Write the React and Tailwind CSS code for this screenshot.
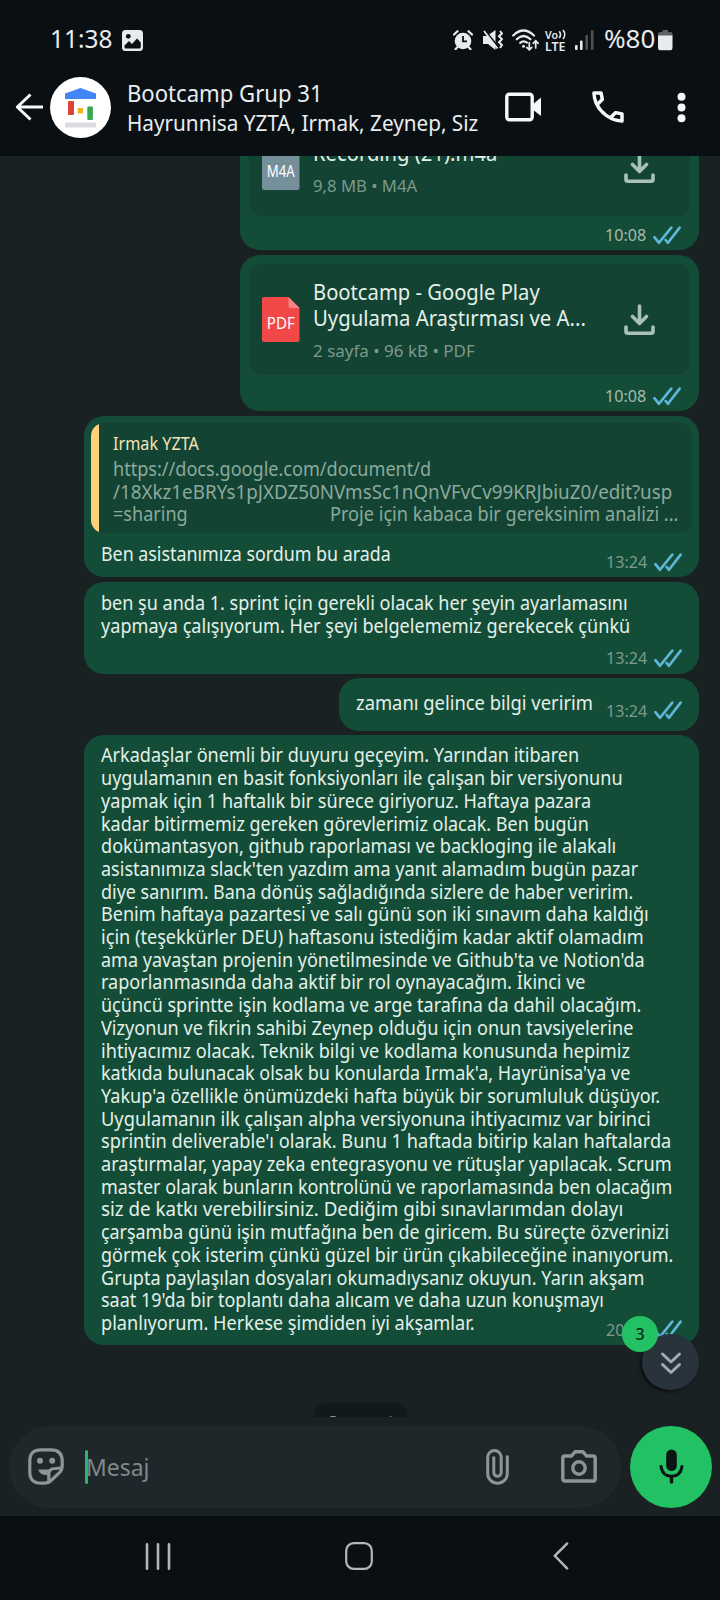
import { useLayoutEffect, useRef, useState } from "react";

/* One line of text condensed or widened so that it spans `w` pixels. */
function Fit({ w, children, className = "" }) {
  const ref = useRef(null);
  const [scale, setScale] = useState(1);
  useLayoutEffect(() => {
    setScale(w / ref.current.offsetWidth);
  }, [w, children]);
  return (
    <span className={"block shrink-0 whitespace-pre " + className} style={{ width: w + "px" }}>
      <span ref={ref} className="block w-max origin-left" style={{ transform: `scaleX(${scale})` }}>
        {children}
      </span>
    </span>
  );
}

function Ticks() {
  return (
    <svg width="28" height="19" viewBox="0 0 28 19" fill="none" stroke="#5fb8dc" strokeWidth="2.6" strokeLinecap="round" strokeLinejoin="round">
      <path d="M1.4 11.2 L6 16.8 L18.3 1.6" />
      <path d="M12.6 14 L15 16.8 L26.6 1.6" />
    </svg>
  );
}

function Stamp({ time, className = "" }) {
  return (
    <div className={"flex h-5 shrink-0 items-center text-[16.5px] leading-5 " + className}>
      <Fit w={41}>{time}</Fit>
      <span className="ml-[7px]">
        <Ticks />
      </span>
    </div>
  );
}

function Download() {
  return (
    <svg className="mt-px" width="31" height="32" viewBox="0 0 31 32" fill="none" stroke="#a9c0b6" strokeWidth="3.6" strokeLinecap="round" strokeLinejoin="round">
      <path d="M15.5 2 V18.5 M8.5 12.5 L15.5 19.5 L22.5 12.5" />
      <path d="M2 23 V27.5 Q2 29.3 3.8 29.3 H27.2 Q29 29.3 29 27.5 V23" />
    </svg>
  );
}

function FileIcon({ label, fill, fold }) {
  return (
    <svg width="38" height="45" viewBox="0 0 38 45" className="shrink-0">
      <path d="M2 0 H26.5 L37.5 11 V43 Q37.5 45 35.5 45 H2 Q0 45 0 43 V2 Q0 0 2 0 Z" fill={fill} />
      <path d="M26.5 0 L37.5 11 H28.5 Q26.5 11 26.5 9 Z" fill={fold} />
      <text x="18.8" y="32" textAnchor="middle" fontSize="16" textLength="28" lengthAdjust="spacingAndGlyphs" fill="#fff">
        {label}
      </text>
    </svg>
  );
}

const LONG = [
  ["Arkadaşlar önemli bir duyuru geçeyim. Yarından itibaren", 477],
  ["uygulamanın en basit fonksiyonları ile çalışan bir versiyonunu", 521],
  ["yapmak için 1 haftalık bir sürece giriyoruz. Haftaya pazara", 489],
  ["kadar bitirmemiz gereken görevlerimiz olacak. Ben bugün", 487],
  ["dokümantasyon, github raporlaması ve backloging ile alakalı", 514],
  ["asistanımıza slack'ten yazdım ama yanıt alamadım bugün pazar", 536],
  ["diye sanırım. Bana dönüş sağladığında sizlere de haber veririm.", 531],
  ["Benim haftaya pazartesi ve salı günü son iki sınavım daha kaldığı", 547],
  ["için (teşekkürler DEU) haftasonu istediğim kadar aktif olamadım", 542],
  ["ama yavaştan projenin yönetilmesinde ve Github'ta ve Notion'da", 543],
  ["raporlanmasında daha aktif bir rol oynayacağım. İkinci ve", 484],
  ["üçüncü sprintte işin kodlama ve arge tarafına da dahil olacağım.", 539],
  ["Vizyonun ve fikrin sahibi Zeynep olduğu için onun tavsiyelerine", 531],
  ["ihtiyacımız olacak. Teknik bilgi ve kodlama konusunda hepimiz", 528],
  ["katkıda bulunacak olsak bu konularda Irmak'a, Hayrünisa'ya ve", 528],
  ["Yakup'a özellikle önümüzdeki hafta büyük bir sorumluluk düşüyor.", 558],
  ["Uygulamanın ilk çalışan alpha versiyonuna ihtiyacımız var birinci", 549],
  ["sprintin deliverable'ı olarak. Bunu 1 haftada bitirip kalan haftalarda", 569],
  ["araştırmalar, yapay zeka entegrasyonu ve rütuşlar yapılacak. Scrum", 570],
  ["master olarak bunların kontrolünü ve raporlamasında ben olacağım", 570],
  ["siz de katkı verebilirsiniz. Dediğim gibi sınavlarımdan dolayı", 521],
  ["çarşamba günü işin mutfağına ben de giricem. Bu süreçte özverinizi", 567],
  ["görmek çok isterim çünkü güzel bir ürün çıkabileceğine inanıyorum.", 571],
  ["Grupta paylaşılan dosyaları okumadıysanız okuyun. Yarın akşam", 542],
  ["saat 19'da bir toplantı daha alıcam ve daha uzun konuşmayı", 502],
  ["planlıyorum. Herkese şimdiden iyi akşamlar.", 374],
];

function StatusBar() {
  return (
    <div className="flex h-[70px] shrink-0 items-start pl-[49.5px] pt-[22px] text-[#e8ebed]">
      <Fit w={62} className="text-[26px] leading-8">11:38</Fit>
      <svg className="ml-[10.5px] mt-2" width="21" height="21" viewBox="0 0 21 21">
        <rect width="21" height="21" rx="3.5" fill="#e8ebed" />
        <circle cx="6.3" cy="6.3" r="2.4" fill="#0a0f13" />
        <path d="M2.5 15.5 L7 11 L10 14 L15 8.5 L18.8 12.5 V17 Q18.8 18.5 17.3 18.5 H4 Q2.5 18.5 2.5 17 Z" fill="#0a0f13" />
      </svg>
      <div className="ml-auto mr-[47px] flex items-start">
        <svg className="mt-2" width="20" height="20" viewBox="0 0 20 20">
          <circle cx="10" cy="11" r="8.3" fill="#e8ebed" />
          <path d="M1 4.5 L4.5 1.2 M19 4.5 L15.5 1.2 M4.5 17 L2.5 19.2 M15.5 17 L17.5 19.2" stroke="#e8ebed" strokeWidth="2.2" strokeLinecap="round" />
          <path d="M10 6 V11.3 H14" fill="none" stroke="#0a0f13" strokeWidth="1.8" />
        </svg>
        <svg className="ml-[10px] mt-[7px]" width="20" height="22" viewBox="0 0 20 22">
          <path d="M0 7 H4 L12.5 1 V21 L5 15 H0 Z" fill="#e8ebed" />
          <path d="M0 -0.5 L15 18" stroke="#0a0f13" strokeWidth="2.4" />
          <path d="M1 2 L14.5 19.5" stroke="#e8ebed" strokeWidth="1.8" />
          <path d="M17 2 L19 4.5 L16 7.3 L19 10.2 L16 13.2 L19 16 L17 19" fill="none" stroke="#e8ebed" strokeWidth="2" />
        </svg>
        <svg className="ml-[9px] mt-[6px]" width="28" height="24" viewBox="0 0 28 24" fill="none" stroke="#e8ebed" strokeWidth="2.2" strokeLinecap="round">
          <path d="M1.2 7.5 Q11.5 -2.5 22 7.5" />
          <path d="M4.7 11.3 Q11.5 4.7 18.5 11.3" />
          <path d="M8.2 14.9 Q11.5 11.8 15 14.6" />
          <circle cx="11.5" cy="18.3" r="1.5" fill="#e8ebed" stroke="none" />
          <path d="M17.3 14.5 V21.5 M14.8 19.3 L17.3 21.8 L19.8 19.3" strokeWidth="1.7" />
          <path d="M23.7 20 V13 M21.2 15.3 L23.7 12.8 L26.2 15.3" strokeWidth="1.7" />
        </svg>
        <svg className="ml-[5px] mt-[6px] overflow-visible" width="22" height="24" viewBox="0 0 22 24" fill="#e8ebed">
          <text x="0" y="10.5" fontSize="11" fontWeight="600" textLength="13" lengthAdjust="spacingAndGlyphs">Vo</text>
          <path d="M14.3 3.2 Q16.7 6.5 14.3 10 M18 2 Q21.5 6.5 18 11" fill="none" stroke="#e8ebed" strokeWidth="1.6" />
          <text x="0" y="22.5" fontSize="12.5" fontWeight="600" textLength="20.5" lengthAdjust="spacingAndGlyphs">LTE</text>
        </svg>
        <svg className="ml-2 mt-2" width="19" height="20" viewBox="0 0 19 20">
          <rect x="0" y="15" width="2.6" height="5" rx="1" fill="#e8ebed" />
          <rect x="5" y="10.5" width="2.6" height="9.5" rx="1" fill="#e8ebed" />
          <rect x="10.4" y="5" width="2.6" height="15" rx="1" fill="#4c5256" />
          <rect x="15.9" y="0" width="2.6" height="20" rx="1" fill="#4c5256" />
        </svg>
        <Fit w={51} className="ml-[10px] text-[26px] leading-8">%80</Fit>
        <svg className="ml-[3px] mt-2" width="15" height="21" viewBox="0 0 15 21">
          <path d="M4.5 0 H10 V2 H12.5 Q14.5 2 14.5 4 V7 H0 V4 Q0 2 2 2 H4.5 Z" fill="#5b6164" />
          <path d="M0 5.5 H14.5 V18 Q14.5 20.3 12.5 20.3 H2 Q0 20.3 0 18 Z" fill="#e8ebed" />
        </svg>
      </div>
    </div>
  );
}

function Header() {
  return (
    <div className="flex h-[86px] shrink-0 items-center pb-3 pl-[15px] text-[#e9edef]">
      <svg width="29" height="28" viewBox="0 0 29 28" fill="none" stroke="#f7f8fa" strokeWidth="3" strokeLinejoin="round">
        <path d="M15.5 1.5 L2.3 14 L15.5 26.5 M2.5 14 H28" />
      </svg>
      <svg className="ml-[6px]" width="61" height="61" viewBox="0 0 61 61">
        <circle cx="30.5" cy="30.5" r="30.5" fill="#fff" />
        <path d="M15 16.5 L30.5 11 L46 16.5 V22 H15 Z" fill="#4285f4" />
        <rect x="18" y="24" width="6" height="14" rx="1" fill="#db4437" />
        <rect x="27.7" y="31" width="5.4" height="5.4" rx="0.8" fill="#f4b41a" />
        <rect x="37.3" y="29.5" width="5.6" height="13.5" rx="1" fill="#34a853" />
        <rect x="15" y="45.5" width="31" height="5" rx="1" fill="#dadce0" />
      </svg>
      <div className="ml-[15.5px] w-[378.5px] pt-px">
        <Fit w={196} className="text-[23px] leading-[30px]">Bootcamp Grup 31</Fit>
        <Fit w={351} className="text-[21px] leading-[30px]">Hayrunnisa YZTA, Irmak, Zeynep, Siz</Fit>
      </div>
      <svg width="37" height="30" viewBox="0 0 37 30">
        <rect x="1.8" y="2.3" width="25.4" height="25.4" rx="2.5" fill="none" stroke="#f7f8fa" strokeWidth="3.4" />
        <path d="M27 13 L36 5.5 V24 L27 17 Z" fill="#f7f8fa" />
      </svg>
      <svg className="ml-[45px]" width="42" height="42" viewBox="0 0 24 24" fill="#f7f8fa">
        <path d="M19.95 21q-3.125 0-6.175-1.363-3.05-1.362-5.55-3.862T4.363 10.225 3 4.05q0-.45.3-.75t.75-.3H8.1q.35 0 .625.238.275.237.325.562l.65 3.5q.05.4-.025.675-.075.275-.275.475L6.975 10.9q.5.925 1.187 1.787.688.863 1.513 1.663.775.775 1.625 1.438.85.662 1.8 1.212l2.35-2.35q.225-.225.588-.337.362-.113.712-.063l3.45.7q.35.1.575.363.225.262.225.587v4.05q0 .45-.3.75t-.75.3ZM6.025 9l1.65-1.65L7.25 5H5.025q.125 1.025.35 2.025.225 1 .65 1.975Zm8.95 8.95q.975.425 1.988.675 1.012.25 2.037.325v-2.2l-2.35-.475Z" />
      </svg>
      <svg className="ml-[48px]" width="9" height="31" viewBox="0 0 9 31" fill="#f7f8fa">
        <circle cx="4.5" cy="4.8" r="4" />
        <circle cx="4.5" cy="15.5" r="4" />
        <circle cx="4.5" cy="26.2" r="4" />
      </svg>
    </div>
  );
}

function Chat() {
  return (
    <div className="relative flex h-[1261px] shrink-0 flex-col items-end overflow-hidden pr-[21px] text-[19.5px] leading-[22.7px] text-[#e3f0ea]">
      <div className="-mt-[46px] flex h-[140px] w-[459px] shrink-0 flex-col rounded-[20px] bg-[#144d37] px-[9px] pt-2">
        <div className="flex h-[98px] items-center rounded-[13px] bg-[#134333] pl-[13px]">
          <FileIcon label="M4A" fill="#758f9b" fold="#9fb1ba" />
          <div className="ml-[13px] w-[310.5px] pt-[5px]">
            <Fit w={184} className="text-[21px] leading-[25.7px]">Recording (21).m4a</Fit>
            <Fit w={104} className="mt-[7px] text-[17px] leading-6 text-[#7b9a8d]">9,8 MB • M4A</Fit>
          </div>
          <Download />
        </div>
        <Stamp time="10:08" className="mr-[9px] mt-[9px] self-end text-[#a3bcb1]" />
      </div>

      <div className="mt-[5px] flex h-[156px] w-[459px] shrink-0 flex-col rounded-[20px] bg-[#144d37] px-[9px] pt-[8.5px]">
        <div className="flex h-[111px] items-center rounded-[13px] bg-[#134333] pl-[13px]">
          <FileIcon label="PDF" fill="#f34848" fold="#f78484" />
          <div className="ml-[13px] w-[310.5px] pt-[5px]">
            <Fit w={227} className="text-[21px] leading-[25.7px]">Bootcamp - Google Play</Fit>
            <Fit w={273} className="text-[21px] leading-[25.7px]">Uygulama Araştırması ve A...</Fit>
            <Fit w={162} className="mt-[7.7px] text-[17px] leading-6 text-[#7b9a8d]">2 sayfa • 96 kB • PDF</Fit>
          </div>
          <Download />
        </div>
        <Stamp time="10:08" className="mr-[9px] mt-[11.5px] self-end text-[#a3bcb1]" />
      </div>

      <div className="mt-[5px] h-[161px] w-[615px] shrink-0 rounded-[20px] bg-[#144d37] px-[7px] pt-[7px]">
        <div className="flex h-[110px] overflow-hidden rounded-[13px] bg-[#134333]">
          <div className="w-2 shrink-0 bg-[#fdd07a]" />
          <div className="pl-[13.5px] pt-[9px] text-[#8ba99c]">
            <Fit w={86} className="text-[17.5px] leading-[22px] text-[#f3e3b5]">Irmak YZTA</Fit>
            <Fit w={318} className="mt-1">https://docs.google.com/document/d</Fit>
            <Fit w={559}>/18Xkz1eBRYs1pJXDZ50NVmsSc1nQnVFvCv99KRJbiuZ0/edit?usp</Fit>
            <div className="flex w-[565px] justify-between">
              <Fit w={75}>=sharing</Fit>
              <Fit w={348}>Proje için kabaca bir gereksinim analizi ...</Fit>
            </div>
          </div>
        </div>
        <div className="flex items-start justify-between pl-[10px] pr-[10px] pt-[10px]">
          <Fit w={290}>Ben asistanımıza sordum bu arada</Fit>
          <Stamp time="13:24" className="mt-[9px] text-[#7b9a8d]" />
        </div>
      </div>

      <div className="mt-[5px] flex h-[91.5px] w-[615px] shrink-0 flex-col rounded-[20px] bg-[#144d37] pl-[17px] pr-[17px] pt-[10px]">
        <Fit w={527}>ben şu anda 1. sprint için gerekli olacak her şeyin ayarlamasını</Fit>
        <Fit w={529}>yapmaya çalışıyorum. Her şeyi belgelememiz gerekecek çünkü</Fit>
        <Stamp time="13:24" className="mt-[11px] self-end text-[#7b9a8d]" />
      </div>

      <div className="mt-[4.5px] flex h-[53px] w-[360px] shrink-0 items-start justify-between rounded-[20px] bg-[#144d37] pl-[16.5px] pr-[17px] pt-[13.5px]">
        <Fit w={236.5}>zamanı gelince bilgi veririm</Fit>
        <Stamp time="13:24" className="mt-[9px] text-[#7b9a8d]" />
      </div>

      <div className="mt-[4px] h-[610px] w-[615px] shrink-0 rounded-[20px] bg-[#144d37] pl-[17px] pr-[17px] pt-[9.4px]">
        {LONG.slice(0, -1).map(([text, w]) => (
          <Fit key={text} w={w + 1}>{text}</Fit>
        ))}
        <div className="flex items-start justify-between">
          <Fit w={LONG[25][1]}>{LONG[25][0]}</Fit>
          <Stamp time="20:15" className="mt-[8px] text-[#7b9a8d]" />
        </div>
      </div>

      <div className="mr-[292px] mt-[58px] flex h-[36px] w-[93px] shrink-0 justify-center rounded-[12px] bg-[#12191b] pt-[9px] text-[16.5px] leading-5 text-[#8d9598]">
        <Fit w={64}>Pazartesi</Fit>
      </div>

      <div className="absolute left-[642px] top-[1178px] flex h-14 w-[57px] items-center justify-center rounded-full bg-[#29333b] pt-[2px] shadow-[-2px_2px_3px_#0c1113]">
        <svg width="22" height="24" viewBox="0 0 22 24" fill="none" stroke="#a3abb0" strokeWidth="3" strokeLinecap="round" strokeLinejoin="round">
          <path d="M2.5 3 L11 11 L19.5 3 M2.5 13.5 L11 21.5 L19.5 13.5" />
        </svg>
      </div>
      <div className="absolute left-[622px] top-[1160px] flex h-9 w-9 items-center justify-center rounded-full bg-[#22c163] text-[16px] font-medium leading-none text-[#0b2a18]">
        3
      </div>
    </div>
  );
}

function Composer() {
  return (
    <div className="flex h-[99px] shrink-0 items-start pl-[9px] pt-[8.5px]">
      <div className="flex h-[82px] w-[612px] items-center rounded-full bg-[#1f272a] pl-[19px]">
        <svg width="36" height="37" viewBox="0 0 36 37" fill="none" stroke="#8d9598" strokeWidth="3.2" strokeLinejoin="round">
          <path d="M1.8 13 Q1.8 1.8 13 1.8 H23 Q34.2 1.8 34.2 13 V19 Q34 22 32 24.2 L22.5 33 Q20.3 35.2 17 35.2 H13 Q1.8 35.2 1.8 24 Z" />
          <path d="M20.8 34.5 V26.5 Q20.8 20.5 27 20.5 L33.8 20" />
          <path d="M10.2 21.5 H22 Q19.5 23.2 19.5 27 Q12 27.5 10.2 21.5 Z" fill="#8d9598" stroke="none" />
          <circle cx="12" cy="12.8" r="3" fill="#8d9598" stroke="none" />
          <circle cx="24.2" cy="12.8" r="3" fill="#8d9598" stroke="none" />
        </svg>
        <div className="relative z-10 ml-[20.5px] h-[34px] w-[3.5px] rounded-sm bg-[#2cb567]" />
        <Fit w={63} className="-ml-[2.5px] text-[24px] leading-[32px] text-[#80888b]">Mesaj</Fit>
        <svg className="ml-auto" width="23" height="36" viewBox="0 0 23 36" fill="none" stroke="#8d9598" strokeWidth="3">
          <path d="M21.3 6.5 V24.5 A9.8 9.8 0 0 1 1.7 24.5 V8.3 A6.7 6.7 0 0 1 15.2 8.3 V23.5 A3.7 3.7 0 0 1 7.8 23.5 V7.5" />
        </svg>
        <svg className="ml-[52px] mr-6" width="36" height="33" viewBox="0 0 36 33" fill="none" stroke="#8d9598" strokeWidth="3.4" strokeLinejoin="round">
          <path d="M1.8 8 Q1.8 6 3.8 6 H10.5 L14 1.8 H22 L25.5 6 H32.2 Q34.2 6 34.2 8 V29 Q34.2 31 32.2 31 H3.8 Q1.8 31 1.8 29 Z" />
          <circle cx="18" cy="18" r="6.2" />
        </svg>
      </div>
      <div className="ml-[9px] flex h-[82px] w-[82px] items-center justify-center rounded-full bg-[#22c163]">
        <svg width="25" height="35" viewBox="0 0 25 35" fill="none" stroke="#0a1512" strokeWidth="3" strokeLinecap="round">
          <rect x="7.2" y="0.5" width="10.6" height="21.5" rx="5.3" fill="#0a1512" stroke="none" />
          <path d="M2 17.5 Q3.5 27.3 12.5 27.3 Q21.5 27.3 23 17.5" />
          <path d="M12.5 28 V33" strokeWidth="3.4" />
        </svg>
      </div>
    </div>
  );
}

function NavBar() {
  return (
    <div className="flex h-[84px] shrink-0 items-start bg-[#0a0f13] pl-[145px] pt-[26px]">
      <svg className="mt-[1px]" width="26" height="27" viewBox="0 0 26 27" stroke="#b3b7ba" strokeWidth="2.6" strokeLinecap="round">
        <path d="M2 1.3 V25.7 M13 1.3 V25.7 M24 1.3 V25.7" />
      </svg>
      <svg className="ml-[174px]" width="28" height="28" viewBox="0 0 28 28" fill="none" stroke="#b3b7ba" strokeWidth="2.2">
        <rect x="1.2" y="1.2" width="25.6" height="25.6" rx="7.5" />
      </svg>
      <svg className="ml-[180px]" width="16" height="28" viewBox="0 0 16 28" fill="none" stroke="#b3b7ba" strokeWidth="2.4">
        <path d="M14.8 0.8 L1.8 13.8 L14.8 27.2" />
      </svg>
    </div>
  );
}

export default function App() {
  return (
    <div className="flex h-[1600px] w-[720px] flex-col overflow-hidden bg-[#1a2123] font-['Noto_Sans',sans-serif]">
      <div className="shrink-0 bg-[#0a0f13]">
        <StatusBar />
        <Header />
      </div>
      <Chat />
      <Composer />
      <NavBar />
    </div>
  );
}
